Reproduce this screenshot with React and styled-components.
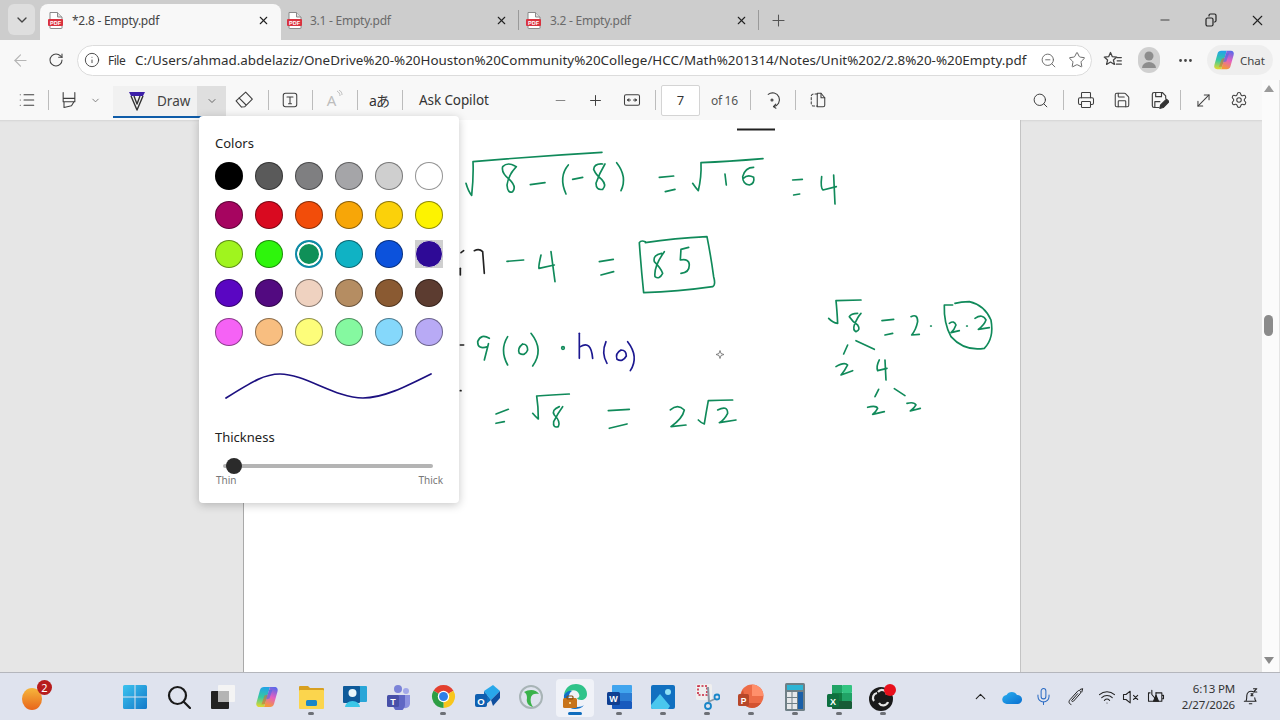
import React, { useId } from "react";
import styled, { createGlobalStyle } from "styled-components";
import {
  ArrowLeft, RotateCw, Info, ZoomOut, Star, Ellipsis, List, ChevronDown, ChevronUp, Minus, Plus,
  Search, Printer, Save, MoveDiagonal, Settings, X, Mic, Wifi,
} from "lucide-react";

const Global = createGlobalStyle`
  html, body { margin: 0; padding: 0; background: #fff; }
  * { box-sizing: border-box; }
  body { font-family: "Noto Sans", "Liberation Sans", sans-serif; }
`;

const Screen = styled.div`
  width: 1280px; height: 720px; overflow: hidden; display: flex; flex-direction: column; background: #f8f8f8;
`;

/* ---------- tabs ---------- */
const TabStrip = styled.div`
  height: 40px; flex: none; display: flex; align-items: flex-end; background: #cdcdcd;
`;
const TabMenu = styled.div`
  width: 27px; height: 31px; margin: 0 5px 5px 8px; border-radius: 6px; background: #dedede;
  display: flex; align-items: center; justify-content: center; color: #444;
`;
const Tab = styled.div`
  width: ${p => p.$w}px; height: ${p => (p.$active ? 36 : 40)}px; flex: none; display: flex; align-items: center;
  padding: 0 ${p => p.$pr}px ${p => (p.$active ? 4 : 0)}px ${p => p.$pl}px;
  background: ${p => (p.$active ? "#f8f8f8" : "transparent")};
  border-radius: ${p => (p.$active ? "8px 8px 0 0" : "0")};
  color: ${p => (p.$active ? "#444" : "#6a6a6a")};
`;
const TabTitle = styled.span`
  margin-left: ${p => p.$ml}px; flex: 1; font-size: 12px; letter-spacing: -0.25px; white-space: nowrap;
`;
const TabDivider = styled.div`
  width: 1px; height: 20px; margin-bottom: 10px; background: #9a9a9a; flex: none;
`;
const NewTab = styled.div`
  width: 38px; height: 40px; flex: none; display: flex; align-items: center; justify-content: center; color: #555;
`;
const WindowControls = styled.div`
  margin-left: auto; display: flex; height: 40px;
`;
const WindowButton = styled.div`
  width: 46px; display: flex; align-items: center; justify-content: center; color: #222;
`;

/* ---------- address ---------- */
const AddressRow = styled.div`
  height: 40px; flex: none; display: flex; align-items: center; padding-left: 2px; background: #f8f8f8;
`;
const NavButton = styled.div`
  width: ${p => p.$w || 36}px; margin-left: ${p => p.$ml || 0}px; height: 32px; flex: none;
  display: flex; align-items: center; justify-content: center; color: ${p => p.$c || "#444"};
`;
const AddressPill = styled.div`
  width: 1015px; height: 31px; margin-left: 3px; flex: none; display: flex; align-items: center;
  padding: 0 0 0 6px; background: #fff; border: 1px solid #dcdcdc; border-radius: 16px; color: #444;
  svg { flex: none; }
`;
const FileLabel = styled.span`
  margin-left: 8px; width: 17px; flex: none; font-size: 12px; color: #333; white-space: nowrap; letter-spacing: -0.5px;
`;
const PathText = styled.span`
  margin-left: 10px; width: 886px; flex: none; font-size: 13.4px; color: #2f2f2f; white-space: nowrap; overflow: visible;
`;
const PillIcon = styled.span`
  width: ${p => p.$w}px; margin-left: ${p => p.$ml || 0}px; flex: none; display: flex; justify-content: center; color: #666;
`;
const ChatPill = styled.div`
  width: 66px; height: 30px; margin-left: 4px; flex: none; display: flex; align-items: center; gap: 5px;
  padding-left: 6px; border-radius: 15px; background: #eeeeee; color: #444; font-size: 11.5px;
`;
const Avatar = styled.div`
  width: 22px; height: 26px; border-radius: 11px; background: #d0d0d0; display: flex; align-items: center; justify-content: center;
`;

/* ---------- lower ---------- */
const Lower = styled.div`
  flex: 1; min-height: 0; display: flex; position: relative;
`;
const MainColumn = styled.div`
  width: 1262px; flex: none; display: flex; flex-direction: column;
`;
const Toolbar = styled.div`
  height: 40px; flex: none; display: flex; align-items: center; padding: 0 5px 0 9px; background: #f8f8f8; color: #444;
`;
const ToolButton = styled.div`
  width: ${p => p.$w}px; margin-left: ${p => p.$ml || 0}px; height: 30px; flex: none;
  display: flex; align-items: center; justify-content: center; color: ${p => p.$c || "#3f3f3f"};
`;
const Sep = styled.div`
  width: 1px; height: 20px; flex: none; margin-left: ${p => p.$ml || 0}px; background: #bcbcbc;
`;
const DrawGroup = styled.div`
  width: 113px; height: 32px; margin-left: 12px; margin-top: 3px; flex: none; display: flex; border-bottom: 2px solid #0f5ca8;
  background: #f1f1f1;
`;
const DrawMain = styled.div`
  width: 84px; display: flex; align-items: center; gap: 11px; padding-left: 15px; font-size: 13.5px; color: #444;
`;
const DrawChevron = styled.div`
  width: 29px; display: flex; align-items: center; justify-content: center; background: #dfdfdf; color: #666;
`;
const Translate = styled.span`
  font-size: 14px; color: #333; letter-spacing: -1px;
  font-family: "Noto Sans", "Noto Sans CJK JP", sans-serif;
`;
const ReadA = styled.span`
  font-size: 15px; color: #bdbdbd; display: flex; align-items: flex-start;
`;
const AskCopilot = styled.div`
  width: 71px; margin-left: 16px; flex: none; font-size: 13.5px; color: #333; white-space: nowrap; letter-spacing: -0.1px;
`;
const PageInput = styled.div`
  width: 39px; height: 31px; margin-left: 5px; flex: none; display: flex; align-items: center; justify-content: center;
  background: #fff; border: 1px solid #d4d4d4; border-radius: 2px; font-size: 13px; color: #333;
`;
const PageCount = styled.div`
  width: 27px; margin-left: 11px; flex: none; font-size: 12px; color: #555; white-space: nowrap; letter-spacing: -0.3px;
`;
const RightTools = styled.div`
  margin-left: auto; display: flex; align-items: center; padding-right: 0;
`;
const Viewer = styled.div`
  flex: 1; min-height: 0; display: flex; background: #e6e6e6; box-shadow: inset 0 3px 2px -2px #d4d4d4;
`;
const Sheet = styled.div`
  width: 778px; height: 100%; margin-left: 243px; flex: none; background: #fff;
  border-left: 1px solid #a9a9a9; border-right: 1px solid #c4c4c4;
`;
const InkSvg = styled.svg`
  display: block; width: 778px; height: 100%;
`;
const ScrollColumn = styled.div`
  width: 18px; flex: none; display: flex; flex-direction: column; align-items: center; background: #fbfbfb;
  border-right: 1px solid #e4e4e4; padding: 5px 4px 8px 0; color: #8a8a8a;
`;
const ScrollThumb = styled.div`
  width: 9px; height: 21px; margin-top: 223px; border-radius: 5px; background: #8b8b8b;
`;
const ArrowUp = styled.div`
  width: 0; height: 0; border-left: 5px solid transparent; border-right: 5px solid transparent; border-bottom: 7px solid #9a9a9a;
`;
const ArrowDown = styled.div`
  width: 0; height: 0; margin-top: auto; border-left: 5px solid transparent; border-right: 5px solid transparent; border-top: 7px solid #8a8a8a;
`;

/* ---------- popover ---------- */
const Popover = styled.div`
  position: absolute; left: 199px; top: 36px; width: 260px; height: 387px; background: #fff; border-radius: 4px;
  box-shadow: 0 2px 10px rgba(0,0,0,.22); padding: 18px 16px 0; color: #222;
`;
const PopLabel = styled.div`
  font-size: 13px; line-height: 18px; color: #222;
`;
const SwatchGrid = styled.div`
  display: grid; grid-template-columns: repeat(6, 28px); grid-auto-rows: 28px; column-gap: 12px; row-gap: 11px; margin-top: 10px; 
`;
const SwatchCell = styled.div`
  width: 28px; height: 28px; display: flex; align-items: center; justify-content: center;
  background: ${p => (p.$hover ? "#cfcfcf" : "transparent")};
`;
const Swatch = styled.div`
  width: 28px; height: 28px; border-radius: 50%; background: ${p => p.$c};
  border: 1px solid rgba(0,0,0,.42);
  ${p => p.$hover && "border: 1px solid #ddd; box-shadow: inset 0 0 0 1px #2e0a96;"}
  ${p => p.$picked && `border: 2px solid #0e8aa8; box-shadow: inset 0 0 0 2px #fff;`}
`;
const Curve = styled.svg`
  display: block; width: 228px; height: 40px; margin: 15px 0 0 0;
`;
const ThicknessLabel = styled(PopLabel)`
  margin-top: 27px;
`;
const Slider = styled.div`
  position: relative; width: 210px; height: 16px; margin: 12px 0 0 8px; display: flex; align-items: center;
`;
const SliderTrack = styled.div`
  width: 100%; height: 4px; border-radius: 2px; background: #b4b4b4;
`;
const SliderThumb = styled.div`
  position: absolute; left: 3px; top: 0; width: 16px; height: 16px; border-radius: 50%; background: #2b2b2b;
`;
const SliderLabels = styled.div`
  display: flex; justify-content: space-between; margin: -1px 0 0 1px; font-size: 10px; line-height: 14px; color: #777;
`;

/* ---------- taskbar ---------- */
const Taskbar = styled.div`
  height: 48px; flex: none; display: flex; align-items: center; background: #dfe3ee; border-top: 1px solid #b4b6bc;
`;
const EmberSlot = styled.div`
  position: relative; width: 44px; height: 46px; margin-left: 11px; display: flex; align-items: center; justify-content: center;
`;
const Badge = styled.div`
  position: absolute; right: 3px; top: 6px; width: 15px; height: 15px; border-radius: 50%; background: #b71c1c; color: #fff;
  font-size: 11px; line-height: 15px; text-align: center;
`;
const TaskGroup = styled.div`
  margin-left: 58px; display: flex;
`;
const TaskSlot = styled.div`
  position: relative; width: 44px; height: 47px; flex: none; display: flex; align-items: center; justify-content: center;
`;
const TaskIcon = styled.span`
  position: relative; display: flex;
`;
const ActiveBack = styled.div`
  position: absolute; left: 3px; top: 6px; width: 38px; height: 38px; border-radius: 4px; background: #f0f2f8;
`;
const RunDot = styled.div`
  position: absolute; bottom: 5px; left: 50%; transform: translateX(-50%); height: 3px; border-radius: 2px;
  width: ${p => (p.$active ? 14 : 6)}px; background: ${p => (p.$active ? "#0f6cbd" : "#6d7076")};
`;
const Tray = styled.div`
  margin-left: 59px; display: flex; align-items: center; color: #222;
`;
const TraySlot = styled.div`
  width: ${p => p.$w}px; flex: none; display: flex; align-items: center; justify-content: center; color: ${p => p.$c || "#222"};
`;
const Clock = styled.div`
  width: 65px; flex: none; text-align: right; font-size: 11.5px; line-height: 16px; color: #333; letter-spacing: -0.15px; white-space: nowrap;
`;

/* ---------- drawn icons ---------- */
const Ico = ({ s = 18, vb = 24, children, ...r }) => (
  <svg width={s} height={s} viewBox={`0 0 ${vb} ${vb}`} fill="none" stroke="currentColor" strokeWidth="1.5" strokeLinecap="round" strokeLinejoin="round" {...r}>{children}</svg>
);
const PdfIcon = () => (
  <svg width="15" height="17" viewBox="0 0 15 17">
    <path d="M2 .5h7.5L14 5v11a.5.5 0 0 1-.5.5h-11A.5.5 0 0 1 2 16z" fill="#fff" stroke="#8a8a8a" />
    <path d="M9.5.5V5H14" fill="#ddd" stroke="#8a8a8a" />
    <rect x="0" y="7" width="15" height="7" rx="1" fill="#d9323f" />
    <text x="7.5" y="12.6" textAnchor="middle" fontSize="5.5" fontWeight="700" fill="#fff" fontFamily="Liberation Sans">PDF</text>
  </svg>
);
const RestoreIcon = () => (
  <Ico s={14} vb={14} strokeWidth="1.2"><rect x="2" y="5" width="7" height="8" rx="1.5" /><path d="M5 3V2.5A1.5 1.5 0 0 1 6.5 1h4A1.5 1.5 0 0 1 12 2.5v5A1.5 1.5 0 0 1 10.5 9" /></Ico>
);
const FavList = () => (
  <Ico s={20}><path d="M9 3l2.2 5 5.3.5-4 3.5 1.2 5.3L9 14.5 4.3 17.3 5.5 12l-4-3.5L6.800 8z" /><path d="M17 9h5M17 13h5M16 17h6" /></Ico>
);
const Highlighter = () => (
  <Ico s={20} strokeWidth="1.3"><path d="M5 3v7h14V3M5 10v4l7 0 7 0v-4M6 14v7l9-2 3-5" /></Ico>
);
const DrawPen = () => (
  <svg width="18" height="20" viewBox="0 0 18 20">
    <path d="M1 1h16l-2 4H3z" fill="#3c1fa8" />
    <path d="M3 5l6 14 6-14M6 5l3 8 3-8" fill="none" stroke="#333" strokeWidth="1.4" strokeLinejoin="round" />
  </svg>
);
const EraserIcon = () => (
  <Ico s={20} strokeWidth="1.3"><path d="M14 2.500L22 11l-9 9-4 .5L2.500 13zM6 9.500l8.500 8.500" /></Ico>
);
const TextBox = () => (
  <Ico s={18} strokeWidth="1.4"><rect x="3" y="3" width="18" height="18" rx="3" /><path d="M8 8h8M12 8v9M10 17h4" /></Ico>
);
const FitWidth = () => (
  <Ico s={18} strokeWidth="1.4"><rect x="2" y="5" width="20" height="14" rx="2" /><path d="M6 12h4M14 12h4" /><path d="M8 10.500l-2 1.500 2 1.500M16 10.500l2 1.500-2 1.500" /></Ico>
);
const RotateIcon = () => (
  <Ico s={18} strokeWidth="1.5"><path d="M7 4.500A9.200 9.200 0 1 1 14 20.800" /><path d="M17 17.500l-3 3.300 3.200 2.200" /><circle cx="12" cy="12" r="1.300" /></Ico>
);
const PageView = () => (
  <Ico s={18} strokeWidth="1.4"><path d="M11 4H6a3 3 0 0 0-3 3v10a3 3 0 0 0 3 3h5" strokeDasharray="3 2.500" /><path d="M11 3v18h8a2 2 0 0 0 2-2V9l-5-6z" /><path d="M16 3v6h5" /></Ico>
);
const SaveAs = () => (
  <Ico s={20} strokeWidth="1.4">
    <path d="M12 21H6a2 2 0 0 1-2-2V5a2 2 0 0 1 2-2h10l4 4v3" /><path d="M8 3v5h7V3M7 21v-7h6" />
    <path d="M13 22l1-4 7-7 3 3-7 7z" fill="#333" stroke="#333" />
  </Ico>
);
const TinyPen = () => (
  <Ico s={20} strokeWidth="1.2"><path d="M6 21c-3-1-3-4-1-6l9-10c2-2 5 0 3 3l-8 9c-1 1-3 0-2-1l7-8" /><path d="M17 3l3-1-1 4" /></Ico>
);
const CopilotMark = ({ s = 24 }) => {
  const id = useId();
  return (
    <svg width={s} height={s} viewBox="0 0 24 24">
      <defs>
        <linearGradient id={id + "a"} x1="0.4" y1="0" x2="0.3" y2="1">
          <stop offset="0" stopColor="#22a3e6" /><stop offset=".5" stopColor="#35c9a2" /><stop offset="1" stopColor="#e4d92c" />
        </linearGradient>
        <linearGradient id={id + "b"} x1="0.7" y1="0" x2="0.4" y2="1">
          <stop offset="0" stopColor="#5a68ea" /><stop offset=".5" stopColor="#e45fc0" /><stop offset="1" stopColor="#f49a38" />
        </linearGradient>
      </defs>
      <path d="M9 2h6L9 22H4.500c-2.500 0-3.800-2-3-4.500L5 5c.5-2 2-3 4-3z" fill={`url(#${id}a)`} />
      <path d="M15 22H9l6-20h4.500c2.500 0 3.800 2 3 4.500L19 19c-.5 2-2 3-4 3z" fill={`url(#${id}b)`} />
      <path d="M9.500 10.500l3.500-1-3 9.500-3.500.5z" fill="#e8602a" opacity=".55" />
      <path d="M14.500 13.500l-3.500 1 3-9.500 3.500-.5z" fill="#3a6ae8" opacity=".55" />
    </svg>
  );
};
const Ember = () => (
  <svg width="24" height="28" viewBox="0 0 24 28">
    <defs><linearGradient id="emb" x1="0" y1="0" x2="0" y2="1"><stop offset="0" stopColor="#f6b73c" /><stop offset="1" stopColor="#e8641a" /></linearGradient></defs>
    <ellipse cx="11" cy="16" rx="10" ry="11" fill="url(#emb)" />
  </svg>
);
const Win = () => (
  <svg width="24" height="24" viewBox="0 0 24 24">
    <defs><linearGradient id="win" x1="0" y1="0" x2="1" y2="1"><stop offset="0" stopColor="#3cc3ef" /><stop offset="1" stopColor="#1279c9" /></linearGradient></defs>
    <path d="M0 1.500A1.500 1.500 0 0 1 1.500 0h10v11.500H0zM12.500 0h10A1.500 1.500 0 0 1 24 1.500v10H12.500zM0 12.500h11.500V24h-10A1.500 1.500 0 0 1 0 22.500zM12.500 12.500H24v10a1.500 1.500 0 0 1-1.500 1.500h-10z" fill="url(#win)" />
  </svg>
);
const SearchTask = () => (
  <svg width="24" height="24" viewBox="0 0 24 24" fill="none" stroke="#1a1a1a" strokeWidth="2.200" strokeLinecap="round"><circle cx="10.500" cy="10.500" r="8.500" /><path d="M17 17l6 6" /></svg>
);
const TaskView = () => (
  <svg width="24" height="24" viewBox="0 0 24 24">
    <rect x="7" y="0" width="17" height="17" rx="1" fill="#f4f4f4" />
    <rect x="0" y="6" width="18" height="18" rx="1" fill="#222" />
    <rect x="7" y="6" width="11" height="11" fill="#b4b4b4" />
  </svg>
);
const Explorer = () => (
  <svg width="25" height="24" viewBox="0 0 25 24">
    <path d="M0 2a1 1 0 0 1 1-1h8l2 2h13a1 1 0 0 1 1 1v3H0z" fill="#d8a020" />
    <rect x="0" y="5" width="25" height="19" rx="1" fill="#fbd54d" />
    <rect x="7" y="15" width="11" height="6" rx="1.500" fill="#1a86c8" />
  </svg>
);
const Contact = () => (
  <svg width="24" height="24" viewBox="0 0 24 24">
    <rect x="10" y="1" width="14" height="16" rx="1" fill="#29a6d8" />
    <rect x="0" y="1" width="17" height="17" rx="1" fill="#0e5a9a" />
    <circle cx="9.500" cy="8" r="4" fill="#e9f6fb" />
    <path d="M2 22a7.500 6 0 0 1 15 0z" fill="#3bc7e8" />
  </svg>
);
const Teams = () => (
  <svg width="24" height="26" viewBox="0 0 24 26">
    <circle cx="11" cy="5" r="4" fill="#7b83d8" /><circle cx="19" cy="7" r="3" fill="#a2a8e8" />
    <path d="M14 11h9v9a5 5 0 0 1-9 2z" fill="#8c92e0" />
    <path d="M6 11h12v10a5 5 0 0 1-12 0z" fill="#5f67c4" />
    <rect x="0" y="11" width="12" height="12" rx="1.500" fill="#4750a8" />
    <text x="6" y="20.500" textAnchor="middle" fontSize="9" fontWeight="700" fill="#fff" fontFamily="Liberation Sans">T</text>
  </svg>
);
const Chrome = () => (
  <svg width="25" height="25" viewBox="0 0 24 24">
    <path d="M12 12L2.470 6.500A11 11 0 0 1 21.530 6.500Z" fill="#e3402f" />
    <path d="M12 12L21.530 6.500A11 11 0 0 1 12 23Z" fill="#f8c61c" />
    <path d="M12 12L12 23A11 11 0 0 1 2.470 6.500Z" fill="#2e9e44" />
    <circle cx="12" cy="12" r="5.500" fill="#fff" /><circle cx="12" cy="12" r="4.300" fill="#2f7fe8" />
  </svg>
);
const Outlook = () => (
  <svg width="25" height="24" viewBox="0 0 25 24">
    <path d="M9 6l9-6 7 6-9 9z" fill="#28a8ea" /><path d="M16 15l9-9v7l-7 8z" fill="#0f4f9e" />
    <path d="M9 6l7 9-7 6z" fill="#0c6fbf" />
    <rect x="0" y="9" width="12" height="13" rx="2" fill="#0f5fb0" />
    <text x="6" y="19.500" textAnchor="middle" fontSize="9.500" fontWeight="700" fill="#fff" fontFamily="Liberation Sans">O</text>
  </svg>
);
const GlobeApp = () => (
  <svg width="24" height="26" viewBox="0 0 24 26" fill="none">
    <circle cx="12" cy="13" r="11" stroke="#a8b4b6" strokeWidth="2" />
    <path d="M5 8c5-3 12-3 15 2-4-1-7 0-8 3-1 4 0 7 2 10-5-1-7-5-6-9 0-3-1-5-3-6z" fill="#3ab24a" />
  </svg>
);
const Edge = () => (
  <svg width="26" height="27" viewBox="0 0 26 27">
    <path d="M2 12C3 4 9 1 14 1c6 0 11 4 11 10 0 4-3 6-6 6-2 0-4-1-4-2 2 0 3-2 2-4-1-3-5-5-9-3-3 1-5 3-6 4z" fill="#2fc38a" />
    <path d="M2 12c2-3 5-5 8-4-3 2-4 6-3 10 1 3 4 6 9 6 2 0 5-1 6-2-2 3-6 4-9 4C6 26 1 19 2 12z" fill="#0f6fc8" />
    <rect x="1" y="15" width="14" height="10" rx="1.500" fill="#c8741c" />
    <rect x="5" y="13" width="6" height="3" rx="1" fill="none" stroke="#8a4f12" strokeWidth="1.200" />
    <rect x="7" y="19" width="2" height="2" fill="#f5d28a" />
  </svg>
);
const Word = () => (
  <svg width="25" height="26" viewBox="0 0 25 26">
    <rect x="5" y="1" width="20" height="8" rx="1" fill="#41a5ee" /><rect x="5" y="9" width="20" height="8" fill="#2b7cd3" /><rect x="5" y="17" width="20" height="8" rx="1" fill="#185abd" />
    <rect x="0" y="8" width="13" height="13" rx="1.500" fill="#103f91" />
    <text x="6.500" y="18" textAnchor="middle" fontSize="9" fontWeight="700" fill="#fff" fontFamily="Liberation Sans">W</text>
  </svg>
);
const Photos = () => (
  <svg width="24" height="24" viewBox="0 0 24 24">
    <rect x="0" y="0" width="24" height="24" rx="2" fill="#1170c0" />
    <circle cx="17" cy="7" r="3" fill="#8fe0f5" />
    <path d="M0 20l9-11 10 12-2 3H2a2 2 0 0 1-2-2z" fill="#4ac7ee" />
  </svg>
);
const Snip = () => (
  <svg width="25" height="28" viewBox="0 0 25 28" fill="none">
    <rect x="1" y="1" width="16" height="16" rx="1.500" fill="#efefef" />
    <rect x="3" y="3" width="9" height="9" stroke="#c8243c" strokeWidth="1.600" strokeDasharray="2 1.500" />
    <path d="M13 4l1 15" stroke="#8a9aa5" strokeWidth="2" /><path d="M13 19l7-3" stroke="#8a9aa5" strokeWidth="1.600" />
    <circle cx="13" cy="23" r="3" stroke="#1a86c8" strokeWidth="1.800" /><circle cx="22" cy="14" r="2.500" stroke="#1a86c8" strokeWidth="1.800" />
  </svg>
);
const Ppt = () => (
  <svg width="26" height="26" viewBox="0 0 26 26">
    <circle cx="14" cy="12" r="11.500" fill="#ed6c47" /><path d="M14 .5A11.500 11.500 0 0 1 25.500 12H14z" fill="#ff8f6b" />
    <path d="M5 6a11.500 11.500 0 0 0 9 18c4 0 7-2 9-5H8z" fill="#d35230" />
    <rect x="0" y="10" width="11" height="12" rx="1.500" fill="#b7472a" />
    <text x="5.500" y="19.500" textAnchor="middle" fontSize="8.500" fontWeight="700" fill="#fff" fontFamily="Liberation Sans">P</text>
  </svg>
);
const Calc = () => (
  <svg width="20" height="28" viewBox="0 0 20 28">
    <rect width="20" height="28" rx="1.500" fill="#6f7f86" />
    <rect x="2" y="2" width="16" height="5" fill="#2db5d5" />
    {[0, 1, 2].flatMap(r => [0, 1].map(c => <rect key={`${r}${c}`} x={2 + c * 5.500} y={9 + r * 6} width="4.500" height="5" fill="#e6e8ea" />))}
    <rect x="13" y="9" width="5" height="17" fill="#1a5fa8" />
  </svg>
);
const Excel = () => (
  <svg width="25" height="26" viewBox="0 0 25 26">
    <rect x="5" y="1" width="10" height="8" fill="#21a366" /><rect x="15" y="1" width="10" height="8" rx="1" fill="#33c481" />
    <rect x="5" y="9" width="10" height="8" fill="#107c41" /><rect x="15" y="9" width="10" height="8" fill="#21a366" />
    <rect x="5" y="17" width="20" height="8" rx="1" fill="#185c37" />
    <rect x="0" y="10" width="12" height="13" rx="1.500" fill="#0e7040" />
    <text x="6" y="20.500" textAnchor="middle" fontSize="9" fontWeight="700" fill="#fff" fontFamily="Liberation Sans">X</text>
  </svg>
);
const Obs = () => (
  <svg width="28" height="28" viewBox="0 0 28 28">
    <circle cx="12" cy="16" r="12" fill="#1a1a1a" />
    <g fill="none" stroke="#e6e6e6" strokeWidth="2.200"><path d="M9 9a5 5 0 0 1 9 3" /><path d="M19 19a5 5 0 0 1-9 1" /><path d="M5 18a5 5 0 0 1 3-8" /></g>
    <circle cx="21" cy="7" r="6" fill="#e8101c" />
  </svg>
);
const Cloud = () => (
  <svg width="20" height="16" viewBox="0 0 20 16">
    <defs><linearGradient id="od" x1="0" y1="0" x2="1" y2="1"><stop offset="0" stopColor="#2ab0f0" /><stop offset="1" stopColor="#0a6fd0" /></linearGradient></defs>
    <path d="M5 15a4.500 4.500 0 0 1-.5-9A6 6 0 0 1 15 6a4.500 4.500 0 0 1 1 9z" fill="url(#od)" />
  </svg>
);
const Muted = () => (
  <Ico s={20} strokeWidth="1.300"><path d="M3 9v6h3l5 4V5L6 9zM15 10l5 5M20 10l-5 5" /></Ico>
);
const Battery = () => (
  <Ico s={20} strokeWidth="1.300"><path d="M5 7H3v10h16V7h-7M19 10h2v4h-2" /><path d="M7 4v5l5 6V7" /><path d="M12 10l3 7H9z" fill="#222" /></Ico>
);
const BellZz = () => (
  <Ico s={20} strokeWidth="1.300"><path d="M6 17c1-2 1-4 1-7a5 5 0 0 1 7-4.500M4 17h14c-1-1-1.500-2-1.500-4M10 20h3" /><path d="M15 2h4l-4 4h4M12 8h2.500l-2.500 2.500h2.500" /></Ico>
);

/* ---------- handwriting ---------- */
const INK = "#108a5a";
const BLUE = "#1c1890";
const inkA = [
  "M45 190Q52 215 62 226Q68 170 66 125Q260 108 453 97",
  "M192 138Q170 125 155 140Q150 158 175 178Q198 200 185 215Q170 222 168 195Q172 165 196 140",
  "M238 194L282 188",
  "M352 135Q322 170 345 222",
  "M365 178L395 172",
  "M455 132Q430 130 428 148Q435 165 452 178Q468 195 455 208Q435 212 435 190Q445 160 462 132",
  "M497 128Q530 170 510 212",
  "M625 172L668 168", "M643 215L672 208",
  "M725 190Q735 205 742 212Q752 170 750 128Q830 125 936 116",
  "M822 162L826 195",
  "M168 424L218 420",
  "M270 405Q262 440 264 445L310 435", "M300 395L312 485",
  "M445 425L487 418", "M450 465L488 455",
  "M583 365Q570 360 565 368Q570 440 578 518Q680 515 785 500Q795 495 788 470Q780 410 768 350Q670 355 583 368",
  "M632 400Q605 405 610 425Q630 445 635 460Q625 480 612 470Q608 440 640 395",
  "M713 382L690 388L688 420Q715 415 715 435Q715 458 690 460",
  "M115 655Q90 640 80 665Q80 690 110 680Q118 650 100 720",
  "M170 650Q145 690 170 735",
  "M215 672Q198 685 205 700Q222 710 230 690Q230 672 215 672",
  "M240 640Q280 690 245 738",
  "M332 684a4 4 0 1 0 8 0a4 4 0 1 0-8 0",
  "M135 882L172 868", "M135 910L160 905",
  "M245 880Q255 892 262 897Q262 860 257 828Q300 825 355 822",
  "M325 860Q300 870 310 885Q330 905 322 920Q305 925 308 905Q320 880 335 860",
  "M472 872L535 868", "M475 925L528 912",
  "M658 870Q680 850 700 870Q695 895 660 920L705 915",
  "M742 900Q752 910 760 912Q765 880 772 842Q810 840 845 840",
  "M800 870Q830 855 830 880Q820 900 805 908L855 900",
];
const inkBlue = [
  "M385 640L385 715", "M388 680Q420 660 425 715",
  "M465 665Q450 700 468 730",
  "M510 690Q492 700 498 718Q515 728 526 708Q526 690 510 690",
  "M530 665Q565 710 538 752",
];
const inkBlack = [
  "M70 392Q85 385 95 395L100 460",
  "M30 398L38 392", "M28 445L28 465",
  "M28 675L38 675", "M28 812L30 812",
];
const inkB = [
  "M68 142Q42 142 35 170Q35 192 55 195Q72 190 68 172Q50 162 37 175",
  "M185 180L214 178", "M188 225L206 222",
  "M272 170Q268 205 276 210L316 200", "M308 165L312 252",
];
const inkC = [
  "M383 115Q395 128 410 130Q408 90 405 62L480 60",
  "M470 100Q450 100 445 110Q455 125 470 135Q480 150 465 155Q455 150 460 135Q470 110 480 100",
  "M543 122L578 118", "M552 165L575 160",
  "M630 110Q650 100 650 125Q645 150 632 165L655 163",
  "M689 138L691 138",
  "M755 75L730 75Q728 130 750 170Q790 215 850 205Q880 175 870 120Q850 75 805 65Q780 65 762 70",
  "M745 130Q760 120 765 135Q760 150 750 158L775 152",
  "M797 138L799 138",
  "M822 115Q845 100 855 120Q850 135 832 148L865 143",
  "M440 195L428 222", "M465 182L520 208",
  "M405 260Q430 245 440 255Q430 275 420 285L455 272",
  "M535 240Q525 260 530 272L558 265", "M552 240L555 300",
  "M533 328L522 350", "M580 326L612 347",
  "M500 382Q525 375 530 385Q525 395 515 403L550 395",
  "M618 370Q640 365 645 375Q640 385 628 393L658 385",
];
const Strokes = ({ list, color, w = 5 }) => (
  <g fill="none" stroke={color} strokeWidth={w} strokeLinecap="round" strokeLinejoin="round">
    {list.map((d, i) => <path key={i} d={d} />)}
  </g>
);
const Ink = () => (
  <InkSvg viewBox="243 120 778 552" preserveAspectRatio="none">
    <path d="M736 129.500H774" stroke="#222" strokeWidth="1.800" />
    <g transform="translate(450 120) scale(.3333)">
      <Strokes list={inkA} color={INK} />
      <Strokes list={inkBlue} color={BLUE} />
      <Strokes list={inkBlack} color="#222" />
    </g>
    <g transform="translate(730 120) scale(.3333)"><Strokes list={inkB} color={INK} /></g>
    <g transform="translate(700 280) scale(.3333)"><Strokes list={inkC} color={INK} /></g>
    <path d="M719 350.500l1 3 3 1-3 1-1 3-1-3-3-1 3-1z" fill="#fff" stroke="#777" strokeWidth=".9" />
  </InkSvg>
);

const SWATCHES = [
  "#000000", "#5a5a5a", "#7f7f81", "#a5a5a8", "#cfcfcf", "#ffffff",
  "#a60560", "#d90a20", "#f24d0a", "#f7a608", "#fbd10a", "#fdf300",
  "#a0f41e", "#2ef50c", "#0f9058", "#10b2c4", "#0c52dc", "#2e0a96",
  "#5a06c2", "#520a80", "#efd2c0", "#b58d62", "#8a5a32", "#5c3c30",
  "#f562f5", "#f8be80", "#fdfd7a", "#85f9a0", "#85d8fb", "#b8aaf5",
];

const TASK = [
  [Win], [SearchTask], [TaskView], [CopilotMark], [Explorer, "run"], [Contact], [Teams], [Chrome, "run"], [Outlook],
  [GlobeApp], [Edge, "active"], [Word, "run"], [Photos, "run"], [Snip, "run"], [Ppt, "run"], [Calc, "run"], [Excel, "run"], [Obs, "run"],
];

export default function App() {
  return (
    <Screen>
      <Global />
      <TabStrip>
        <TabMenu><ChevronDown size={16} /></TabMenu>
        <Tab $active $w={241} $pl={8} $pr={11}>
          <PdfIcon /><TabTitle $ml={9}>*2.8 - Empty.pdf</TabTitle><X size={13} color="#222" />
        </Tab>
        <Tab $w={237} $pl={6} $pr={10}>
          <PdfIcon /><TabTitle $ml={8}>3.1 - Empty.pdf</TabTitle><X size={13} color="#222" />
        </Tab>
        <TabDivider />
        <Tab $w={239} $pl={7} $pr={10}>
          <PdfIcon /><TabTitle $ml={9}>3.2 - Empty.pdf</TabTitle><X size={13} color="#222" />
        </Tab>
        <TabDivider />
        <NewTab><Plus size={19} strokeWidth={1.3} /></NewTab>
        <WindowControls>
          <WindowButton><Minus size={14} strokeWidth={1.4} /></WindowButton>
          <WindowButton><RestoreIcon /></WindowButton>
          <WindowButton><X size={17} strokeWidth={1.5} /></WindowButton>
        </WindowControls>
      </TabStrip>

      <AddressRow>
        <NavButton $c="#b5b5b5"><ArrowLeft size={19} strokeWidth={1.4} /></NavButton>
        <NavButton><RotateCw size={16} strokeWidth={1.6} /></NavButton>
        <AddressPill>
          <Info size={16} strokeWidth={1.4} />
          <FileLabel>File</FileLabel>
          <PathText>C:/Users/ahmad.abdelaziz/OneDrive%20-%20Houston%20Community%20College/HCC/Math%201314/Notes/Unit%202/2.8%20-%20Empty.pdf</PathText>
          <PillIcon $w={29} $ml={13}><ZoomOut size={17} strokeWidth={1.3} /></PillIcon>
          <PillIcon $w={28}><Star size={18} strokeWidth={1.3} /></PillIcon>
        </AddressPill>
        <NavButton $ml={3}><FavList /></NavButton>
        <NavButton><Avatar><svg width="14" height="22" viewBox="0 0 14 22"><circle cx="7" cy="7" r="4.500" fill="#8d8d8d" /><path d="M0 19a7 6 0 0 1 14 0z" fill="#8d8d8d" /></svg></Avatar></NavButton>
        <NavButton><Ellipsis size={17} /></NavButton>
        <ChatPill><CopilotMark s={22} />Chat</ChatPill>
      </AddressRow>

      <Lower>
        <MainColumn>
          <Toolbar>
            <ToolButton $w={36}><List size={18} strokeWidth={1.4} /></ToolButton>
            <Sep $ml={3} />
            <ToolButton $w={40}><Highlighter /></ToolButton>
            <ToolButton $w={12} $c="#777"><ChevronDown size={11} /></ToolButton>
            <DrawGroup>
              <DrawMain><DrawPen />Draw</DrawMain>
              <DrawChevron><ChevronDown size={12} /></DrawChevron>
            </DrawGroup>
            <ToolButton $w={36}><EraserIcon /></ToolButton>
            <Sep $ml={6} />
            <ToolButton $w={42}><TextBox /></ToolButton>
            <Sep $ml={1} />
            <ToolButton $w={44}><ReadA>A<svg width="7" height="10" viewBox="0 0 7 10" fill="none" stroke="#bdbdbd"><path d="M1 1c2 1 3 3 3 5M3 0c2 1 3 3 3 5" /></svg></ReadA></ToolButton>
            <Sep />
            <ToolButton $w={42}><Translate>aあ</Translate></ToolButton>
            <Sep $ml={2} />
            <AskCopilot>Ask Copilot</AskCopilot>
            <ToolButton $w={36} $ml={52} $c="#777"><Minus size={15} strokeWidth={1.4} /></ToolButton>
            <ToolButton $w={34}><Plus size={17} strokeWidth={1.4} /></ToolButton>
            <ToolButton $w={40}><FitWidth /></ToolButton>
            <Sep $ml={3} />
            <PageInput>7</PageInput>
            <PageCount>of 16</PageCount>
            <Sep $ml={12} />
            <ToolButton $w={42}><RotateIcon /></ToolButton>
            <Sep $ml={2} />
            <ToolButton $w={44}><PageView /></ToolButton>
            <RightTools>
              <ToolButton $w={36}><Search size={17} strokeWidth={1.4} /></ToolButton>
              <Sep $ml={5} />
              <ToolButton $w={36} $ml={4}><Printer size={18} strokeWidth={1.4} /></ToolButton>
              <ToolButton $w={36}><Save size={18} strokeWidth={1.4} /></ToolButton>
              <ToolButton $w={36} $ml={1}><SaveAs /></ToolButton>
              <Sep $ml={3} />
              <ToolButton $w={36} $ml={4}><MoveDiagonal size={19} strokeWidth={1.3} /></ToolButton>
              <ToolButton $w={36}><Settings size={18} strokeWidth={1.4} /></ToolButton>
            </RightTools>
          </Toolbar>
          <Viewer>
            <Sheet><Ink /></Sheet>
          </Viewer>
        </MainColumn>
        <ScrollColumn>
          <ArrowUp />
          <ScrollThumb />
          <ArrowDown />
        </ScrollColumn>

        <Popover>
          <PopLabel>Colors</PopLabel>
          <SwatchGrid>
            {SWATCHES.map((c, i) => (
              <SwatchCell key={i} $hover={i === 17}>
                <Swatch $c={c} $hover={i === 17} $picked={i === 14} />
              </SwatchCell>
            ))}
          </SwatchGrid>
          <Curve viewBox="0 0 228 40">
            <path d="M11 37C38 20 50 13 65 13C90 13 120 37 148 37C168 37 190 26 216 13" fill="none" stroke="#1c1080" strokeWidth="1.700" strokeLinecap="round" />
          </Curve>
          <ThicknessLabel>Thickness</ThicknessLabel>
          <Slider>
            <SliderTrack />
            <SliderThumb />
          </Slider>
          <SliderLabels><span>Thin</span><span>Thick</span></SliderLabels>
        </Popover>
      </Lower>

      <Taskbar>
        <EmberSlot><Ember /><Badge>2</Badge></EmberSlot>
        <TaskGroup>
          {TASK.map(([Icon, state], i) => (
            <TaskSlot key={i}>
              {state === "active" && <ActiveBack />}
              <TaskIcon><Icon /></TaskIcon>
              {state && <RunDot $active={state === "active"} />}
            </TaskSlot>
          ))}
        </TaskGroup>
        <Tray>
          <TraySlot $w={32}><ChevronUp size={17} strokeWidth={1.6} /></TraySlot>
          <TraySlot $w={32}><Cloud /></TraySlot>
          <TraySlot $w={30} $c="#2b6cc4"><Mic size={19} strokeWidth={1.3} /></TraySlot>
          <TraySlot $w={36}><TinyPen /></TraySlot>
          <TraySlot $w={26}><Wifi size={18} strokeWidth={1.4} /></TraySlot>
          <TraySlot $w={22}><Muted /></TraySlot>
          <TraySlot $w={28}><Battery /></TraySlot>
          <Clock>6:13 PM<br />2/27/2026</Clock>
          <TraySlot $w={32}><BellZz /></TraySlot>
        </Tray>
      </Taskbar>
    </Screen>
  );
}
